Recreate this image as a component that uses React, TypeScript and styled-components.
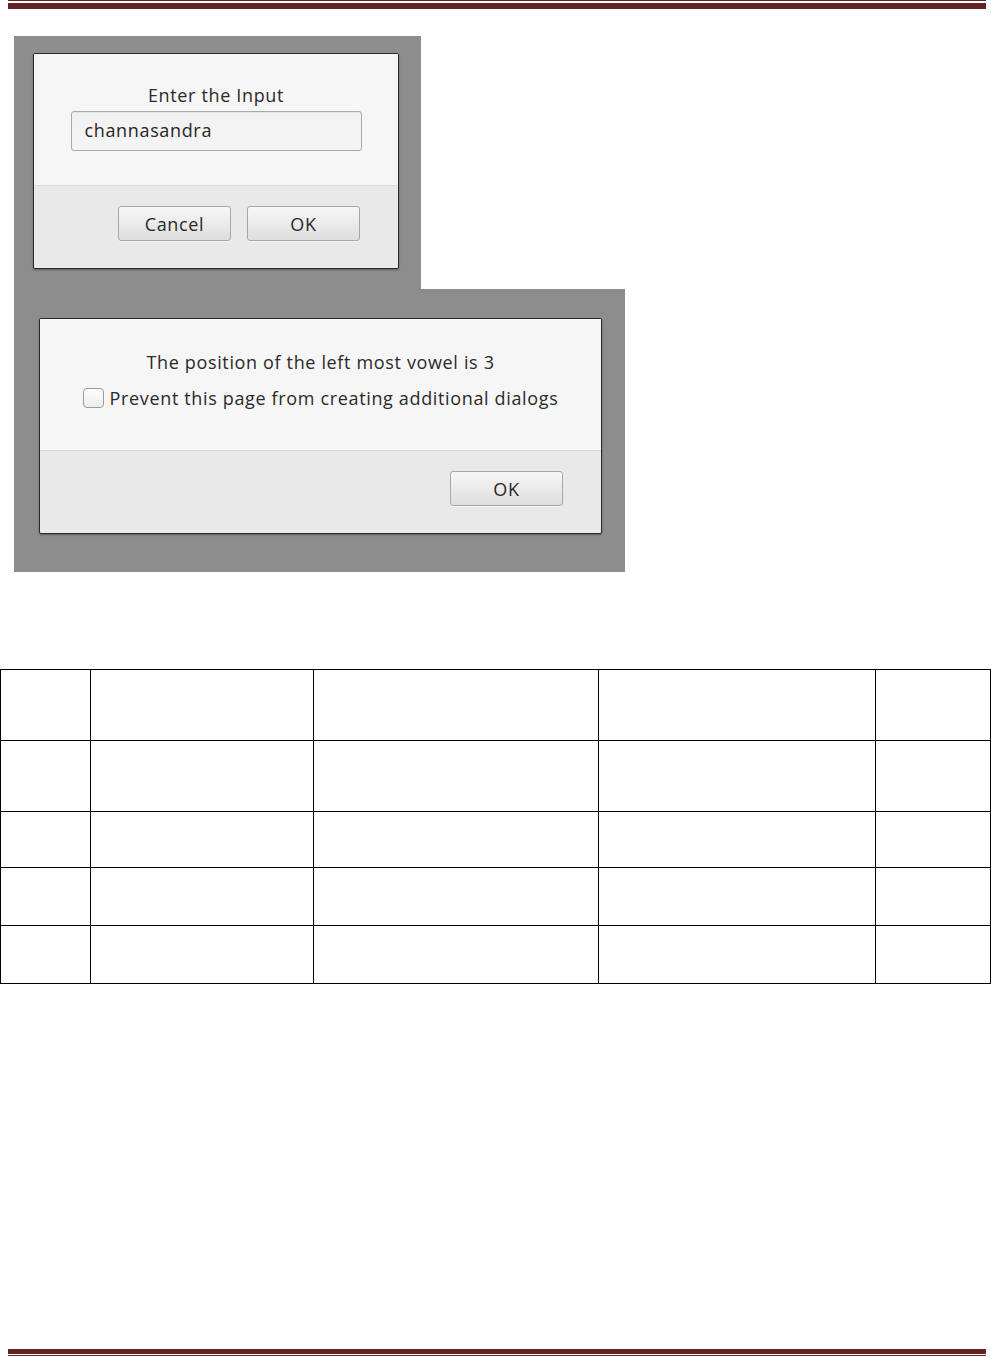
import React from "react";
import styled, { createGlobalStyle } from "styled-components";

const Global = createGlobalStyle`
  html, body { margin: 0; padding: 0; background: #ffffff; }
  body { font-family: "Open Sans", "DejaVu Sans", sans-serif; }
  * { box-sizing: border-box; }
`;

const Page = styled.div`
  min-height: 1357px;
  display: flex;
  flex-direction: column;
`;

const Rule = styled.div<{ $bottom?: boolean }>`
  display: flex;
  flex-direction: ${(p) => (p.$bottom ? "column-reverse" : "column")};
  gap: ${(p) => (p.$bottom ? "1px" : "2px")};
  margin: ${(p) => (p.$bottom ? "auto 5px 1px 8px" : "0 5px 0 8px")};
`;

const ThinLine = styled.div`
  height: 1px;
  background: #622423;
`;

const ThickLine = styled.div<{ $h: number }>`
  height: ${(p) => p.$h}px;
  background: #622423;
`;

const Backdrop = styled.div<{ $w: number; $pad: string }>`
  width: ${(p) => p.$w}px;
  margin-left: 14px;
  padding: ${(p) => p.$pad};
  background-color: #8d8d8d;
  background-image: radial-gradient(rgba(0, 0, 0, 0.05) 0.6px, transparent 0.7px);
  background-size: 2px 2px;
`;

const Shots = styled.div`
  margin-top: 27px;
  display: flex;
  flex-direction: column;
`;

const Dialog = styled.div<{ $w: number }>`
  width: ${(p) => p.$w}px;
  border: 1px solid #2a2a2a;
  border-radius: 2px;
  box-shadow: 0 1px 2px rgba(0, 0, 0, 0.35);
  background: #e9e9e9;
  overflow: hidden;
  color: #2a2a2a;
  font-family: "Open Sans", "DejaVu Sans", sans-serif;
  font-size: 18px;
  letter-spacing: 0.65px;
`;

const DialogBody = styled.div<{ $h: number; $pt: number }>`
  height: ${(p) => p.$h}px;
  padding-top: ${(p) => p.$pt}px;
  background: #f6f6f6;
  border-bottom: 1px solid #dadada;
  display: flex;
  flex-direction: column;
  align-items: center;
`;

const Message = styled.div`
  line-height: 20px;
  text-align: center;
`;

const TextInput = styled.div`
  margin-top: 6px;
  width: 291px;
  height: 40px;
  border: 1px solid #a9a9a9;
  border-radius: 3px;
  background: linear-gradient(#f1f1f1, #f5f5f5);
  box-shadow: inset 0 1px 1px rgba(0, 0, 0, 0.06);
  line-height: 20px;
  padding: 8px 0 0 13px;
  color: #262626;
`;

const CheckRow = styled.label`
  margin-top: 16px;
  display: flex;
  align-items: center;
  gap: 6px;
  line-height: 20px;
`;

const CheckBox = styled.span`
  width: 21px;
  height: 20px;
  border: 1px solid #9a9a9a;
  border-radius: 4px;
  background: linear-gradient(#ffffff, #ececec);
`;

const Footer = styled.div<{ $h: number; $pt: number }>`
  height: ${(p) => p.$h}px;
  padding: ${(p) => p.$pt}px 38px 0 0;
  display: flex;
  justify-content: flex-end;
  align-items: flex-start;
  gap: 16px;
`;

const Button = styled.div`
  width: 113px;
  height: 35px;
  border: 1px solid #a6a6a6;
  border-radius: 3px;
  background: linear-gradient(#f7f7f7, #dedede);
  box-shadow: 0 1px 0 rgba(255, 255, 255, 0.6);
  display: flex;
  align-items: center;
  justify-content: center;
  color: #2a2a2a;
`;

const Table = styled.table`
  margin-top: 97px;
  border-collapse: collapse;
  table-layout: fixed;
  width: 990px;
`;

const Cell = styled.td`
  border: 1px solid #000000;
  padding: 0;
`;

const Row = styled.tr<{ $h: number }>`
  height: ${(p) => p.$h}px;
`;

const colWidths = [90, 223, 285, 277, 115];
const rowHeights = [71, 71, 56, 58, 58];

export default function App() {
  return (
    <Page>
      <Global />
      <Rule>
        <ThinLine />
        <ThickLine $h={6} />
      </Rule>
      <Shots>
        <Backdrop $w={407} $pad="17px 0 20px 19px">
          <Dialog $w={366}>
            <DialogBody $h={132} $pt={31}>
              <Message>Enter the Input</Message>
              <TextInput>channasandra</TextInput>
            </DialogBody>
            <Footer $h={82} $pt={20}>
              <Button>Cancel</Button>
              <Button>OK</Button>
            </Footer>
          </Dialog>
        </Backdrop>
        <Backdrop $w={611} $pad="29px 0 38px 25px">
          <Dialog $w={563}>
            <DialogBody $h={132} $pt={33}>
              <Message>The position of the left most vowel is 3</Message>
              <CheckRow>
                <CheckBox />
                Prevent this page from creating additional dialogs
              </CheckRow>
            </DialogBody>
            <Footer $h={82} $pt={20}>
              <Button>OK</Button>
            </Footer>
          </Dialog>
        </Backdrop>
      </Shots>
      <Table>
        <colgroup>
          {colWidths.map((w, i) => (
            <col key={i} style={{ width: w }} />
          ))}
        </colgroup>
        <tbody>
          {rowHeights.map((h, r) => (
            <Row key={r} $h={h}>
              {colWidths.map((_, c) => (
                <Cell key={c} />
              ))}
            </Row>
          ))}
        </tbody>
      </Table>
      <Rule $bottom>
        <ThinLine />
        <ThickLine $h={5} />
      </Rule>
    </Page>
  );
}
